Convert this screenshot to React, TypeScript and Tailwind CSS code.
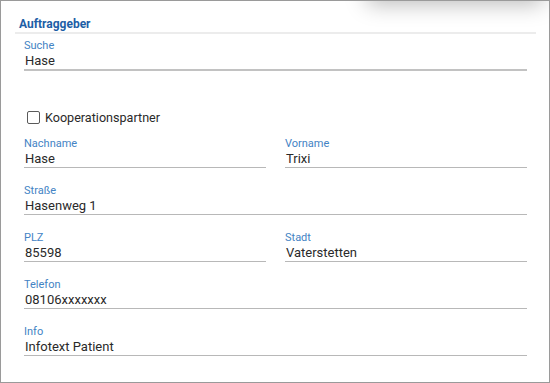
import React from 'react';

type FieldProps = {
    label: string;
    value: string;
    thick?: boolean;
};

const Field = ({ label, value, thick }: FieldProps) => (
    <div className={`flex flex-col ${thick ? 'border-b-2 border-[#c2c2c2]' : 'border-b border-[#b8b8b8]'}`}>
        <span className="text-[11px] leading-[14px] text-[#4383c4]">{label}</span>
        <span className="text-[13px] leading-[16px] text-[#2a2a2a] pl-[1px]">{value}</span>
    </div>
);

const App = () => {
    return (
        <div
            className="relative w-[550px] h-[383px] overflow-hidden bg-white border border-[#9a9a9a]"
            style={{ fontFamily: 'Roboto, "Liberation Sans", Arial, sans-serif' }}
        >
            {/* shadow of the panel above */}
            <div className="absolute -top-[30px] left-[366px] w-[176px] h-[30px] bg-white shadow-[0_3px_22px_rgba(0,0,0,0.28)]" />

            <div className="pt-[15px]">
                {/* Section header */}
                <div className="ml-[14px] w-[521px] pl-[4px] border-b-2 border-[#ececec]">
                    <h2 className="text-[12px] leading-[16px] font-bold text-[#1d5ea6]">Auftraggeber</h2>
                </div>

                <div className="ml-[23px] w-[503px] flex flex-col">
                    <div className="mt-[5px]">
                        <Field label="Suche" value="Hase" thick />
                    </div>

                    <label className="mt-[38px] flex items-center gap-[5px] h-[17px] pl-[3px]">
                        <span className="w-[13px] h-[13px] border-[1.5px] border-[#5a5a5a] rounded-[2px] bg-white" />
                        <span className="text-[12.6px] leading-[16px] text-[#2a2a2a]">Kooperationspartner</span>
                    </label>

                    <div className="mt-[11px] flex flex-col gap-[16px]">
                        <div className="grid grid-cols-2 gap-x-[19px]">
                            <Field label="Nachname" value="Hase" />
                            <Field label="Vorname" value="Trixi" />
                        </div>
                        <Field label="Straße" value="Hasenweg 1" />
                        <div className="grid grid-cols-2 gap-x-[19px]">
                            <Field label="PLZ" value="85598" />
                            <Field label="Stadt" value="Vaterstetten" />
                        </div>
                        <Field label="Telefon" value="08106xxxxxxx" />
                        <Field label="Info" value="Infotext Patient" />
                    </div>
                </div>
            </div>
        </div>
    );
};

export default App;
